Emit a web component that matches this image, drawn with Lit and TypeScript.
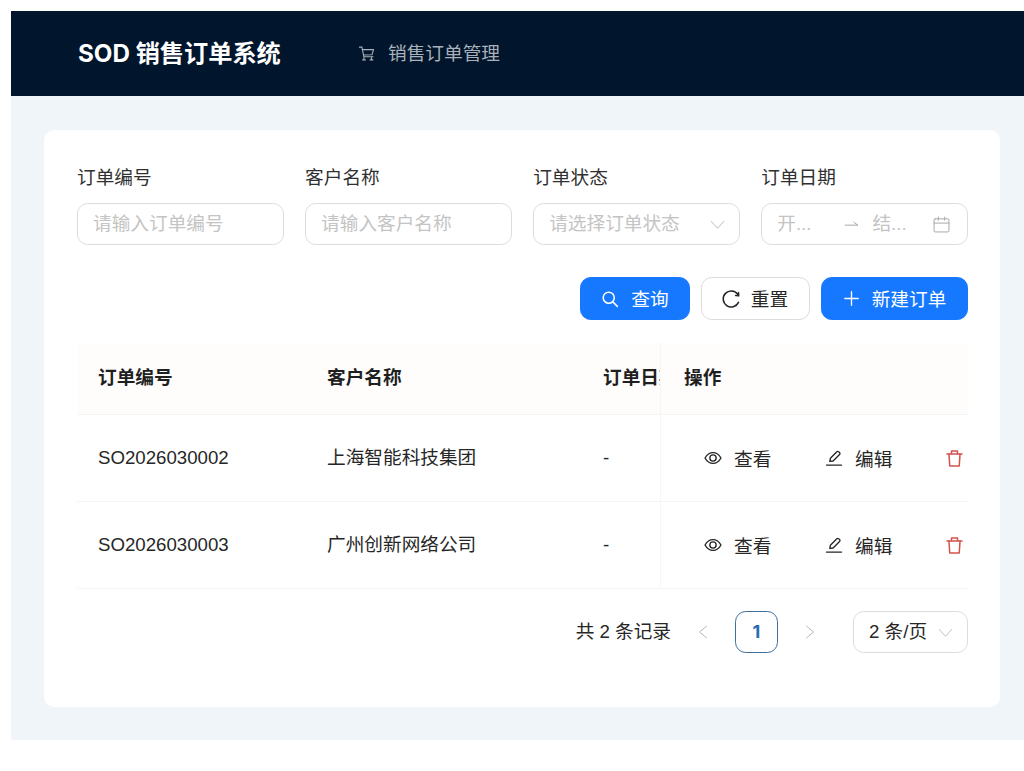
import { LitElement, html, css, svg } from "lit";
import { customElement } from "lit/decorators.js";

const ic = (cls: string, body: unknown) => html`<svg class="ic ${cls}" viewBox="0 0 24 24" fill="none" stroke="currentColor" stroke-linecap="round" stroke-linejoin="round">${body}</svg>`;
const cart = () => ic("cart", svg`<path d="M2 3h3.6l2.6 13.5h13"/><path d="M6 6.5h16l-2.2 7.2-11.8.4"/><path d="M8.4 17.5v3M19 17.5v3"/><path d="M6.5 21h4M17 21h4"/>`);
const search = () => ic("search", svg`<circle cx="10.3" cy="10.3" r="7.4"/><path d="M15.8 15.8 21.8 21.8"/>`);
const redo = () => ic("redo", svg`<path d="M20 6.2A9.6 9.6 0 1 0 21 16"/><path d="M17.6 7.8 21.2 8.2 21 4.4" />`);
const plus = () => ic("plus", svg`<path d="M12 2.5v19M2.5 12h19"/>`);
const eye = () => ic("eye", svg`<path d="M1.4 12C4 7.2 7.6 4.8 12 4.8s8 2.4 10.6 7.2c-2.6 4.8-6.2 7.2-10.6 7.2S4 16.8 1.4 12z"/><circle cx="12" cy="12" r="4.2"/>`);
const edit = () => ic("edit", svg`<path d="M6.4 16.6 7.2 12.4 15.8 3.8a1.8 1.8 0 0 1 2.6 0l1 1a1.8 1.8 0 0 1 0 2.6L10.8 16z"/><path d="M2 21.4h20"/>`);
const trash = () => ic("trash", svg`<path d="M2.5 6.2h19"/><path d="M8.2 6V2.6h7.6V6"/><path d="M5 6.2 6 21.4h12l1-15.2"/>`);
const chev = () => ic("chev", svg`<path d="M2 7l10 11L22 7"/>`);
const left = () => ic("arrow", svg`<path d="M18 2 6 12l12 10"/>`);
const right = () => ic("arrow", svg`<path d="M6 2l12 10L6 22"/>`);
const cal = () => ic("cal", svg`<rect x="1.5" y="4" width="21" height="18.5" rx="1.5"/><path d="M1.5 10h21M7.5 1.5V6M16.5 1.5V6"/>`);
const sep = () => ic("sep", svg`<path d="M1 14h22l-7-5"/>`);

@customElement("app-root")
export class AppRoot extends LitElement {
  static styles = css`
    :host { display: block; background: #fff; padding: 11px 0 31px 11px; font-family: "Liberation Sans", "Noto Sans CJK SC", sans-serif; font-size: 18.67px; line-height: 28px; color: #262626; }
    * { box-sizing: border-box; }
    .ic { display: block; flex: none; width: 18px; height: 18px; stroke-width: 1.8; }
    .topbar { height: 85px; background: #01152c; display: flex; align-items: center; padding: 0 0 0 67px; }
    .title { font-size: 24.2px; font-weight: 700; color: #fff; width: 280px; font-family: "Inter", "Noto Sans CJK SC", sans-serif; white-space: nowrap; }
    .nav { display: flex; align-items: center; gap: 13px; color: #a9b1bb; }
    .nav .cart { width: 17px; height: 17px; stroke-width: 1.5; }
    .main { background: #f0f5fa; padding: 34px 24px 33px 33px; }
    .card { background: #fff; border-radius: 10px; padding: 34px 32px 54px 33px; }
    .form { display: grid; grid-template-columns: repeat(4, 1fr); column-gap: 21.33px; }
    .label { margin-bottom: 11px; color: #303030; }
    .input { height: 42px; border: 1px solid #dcdcdc; border-radius: 10.67px; display: flex; align-items: center; padding: 0 14px 0 15px; color: #c4c4c4; white-space: nowrap; justify-content: space-between; }
    .input .chev { width: 15px; height: 15px; color: #b0b0b0; stroke-width: 1.4; }
    .date { justify-content: flex-start; padding-right: 17px; }
    .date .sep { margin: 0 12px 0 32px; width: 17px; height: 14px; color: #8f8f8f; stroke-width: 1.3; }
    .date .cal { margin-left: auto; width: 17px; height: 17px; color: #a8a8a8; stroke-width: 1.4; }
    .buttons { display: flex; justify-content: flex-end; gap: 11px; margin-top: 32px; }
    .btn { height: 43px; border-radius: 10.67px; display: flex; align-items: center; justify-content: center; gap: 12px; border: 1px solid #1677ff; background: #1677ff; color: #fff; }
    .btn span { padding-top: 3px; }
    .btn.query { width: 110px; }
    .btn.reset { width: 109px; background: #fff; border-color: #dcdcdc; color: #262626; gap: 10px; padding-right: 2px; }
    .btn.create { width: 147px; }
    .btn .search { width: 18px; height: 18px; stroke-width: 2.1; }
    .btn .redo { width: 20px; height: 20px; stroke-width: 1.9; }
    .btn .plus { width: 17px; height: 17px; stroke-width: 1.9; }
    .table { margin-top: 23px; position: relative; }
    .row { display: grid; grid-template-columns: 229px 275px 79px 308px; height: 87px; border-bottom: 1px solid #f4f4f4; align-items: center; }
    .row.head { height: 72px; background: #fefdfc; font-weight: 700; color: #1f1f1f; }
    .cell { padding-left: 21px; white-space: nowrap; overflow: hidden; height: 100%; display: flex; align-items: center; }
    .cell.date-col { padding-left: 22px; }
    .cell.fixed { padding-left: 23px; border-left: 1px solid #f6f6f6; }
    .head .cell { padding-bottom: 2px; }
    .actions { display: flex; align-items: center; }
    .act { display: flex; align-items: center; gap: 12px; }
    .act span { padding-top: 3px; }
    .act .ic { margin-bottom: 1px; }
    .act.view { margin-left: 20px; width: 121px; }
    .act.edit { width: 121px; }
    .trash { color: #d2544f; width: 19px; height: 19px; stroke-width: 1.9; margin-left: -1px; }
    .pager { display: flex; justify-content: flex-end; align-items: center; margin-top: 22px; height: 42px; }
    .pager .arrow { width: 14px; height: 14px; color: #a8a8a8; stroke-width: 1.4; }
    .total { margin-right: 25px; }
    .page { width: 43px; height: 42px; margin: 0 25px 0 25px; border: 1px solid #3f6f9f; border-radius: 10.67px; display: flex; align-items: center; justify-content: center; color: #2a6ab8; font-weight: 700; font-family: "Inter", sans-serif; font-size: 18px; }
    .size { margin-left: 36px; width: 115px; height: 42px; border: 1px solid #dcdcdc; border-radius: 10.67px; display: flex; align-items: center; justify-content: space-between; padding: 0 14px 0 15px; white-space: nowrap; }
    .size .chev { width: 15px; height: 15px; color: #b0b0b0; stroke-width: 1.3; }
  `;

  private orders = [
    { no: "SO2026030002", name: "上海智能科技集团" },
    { no: "SO2026030003", name: "广州创新网络公司" },
  ];

  render() {
    return html`
      <header class="topbar">
        <div class="title">SOD 销售订单系统</div>
        <div class="nav">${cart()}<span>销售订单管理</span></div>
      </header>
      <main class="main">
        <section class="card">
          <div class="form">
            <div><div class="label">订单编号</div><div class="input">请输入订单编号</div></div>
            <div><div class="label">客户名称</div><div class="input">请输入客户名称</div></div>
            <div><div class="label">订单状态</div><div class="input">请选择订单状态${chev()}</div></div>
            <div><div class="label">订单日期</div><div class="input date"><span>开...</span>${sep()}<span>结...</span>${cal()}</div></div>
          </div>
          <div class="buttons">
            <div class="btn query">${search()}<span>查询</span></div>
            <div class="btn reset">${redo()}<span>重置</span></div>
            <div class="btn create">${plus()}<span>新建订单</span></div>
          </div>
          <div class="table">
            <div class="row head">
              <div class="cell">订单编号</div>
              <div class="cell">客户名称</div>
              <div class="cell date-col">订单日期</div>
              <div class="cell fixed">操作</div>
            </div>
            ${this.orders.map((o) => html`
              <div class="row">
                <div class="cell">${o.no}</div>
                <div class="cell">${o.name}</div>
                <div class="cell date-col">-</div>
                <div class="cell fixed actions">
                  <div class="act view">${eye()}<span>查看</span></div>
                  <div class="act edit">${edit()}<span>编辑</span></div>
                  ${trash()}
                </div>
              </div>`)}
          </div>
          <div class="pager">
            <span class="total">共 2 条记录</span>
            ${left()}
            <div class="page">1</div>
            ${right()}
            <div class="size"><span>2 条/页</span>${chev()}</div>
          </div>
        </section>
      </main>
    `;
  }
}
